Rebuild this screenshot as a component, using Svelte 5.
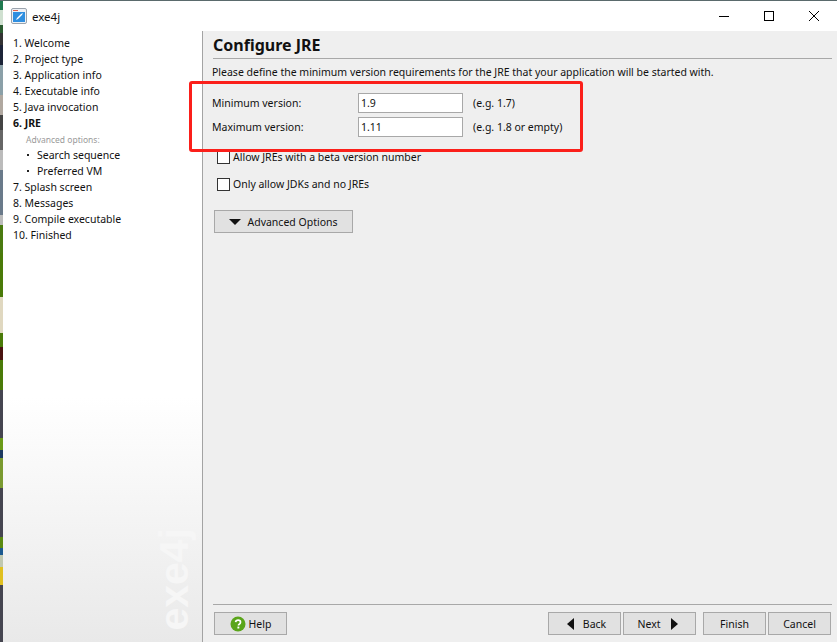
<script>
  const stepsTop = ['1. Welcome', '2. Project type', '3. Application info', '4. Executable info', '5. Java invocation']
  const stepsBottom = ['7. Splash screen', '8. Messages', '9. Compile executable', '10. Finished']
</script>

<div class="desktop">
  <div class="window">
    <header class="titlebar">
      <svg class="app-icon" viewBox="0 0 16 16" width="16" height="16">
        <rect x="0.5" y="0.5" width="15" height="15" rx="1.5" fill="#eef1f5" stroke="#9aa3ad" />
        <rect x="2" y="4" width="12" height="10" fill="#2f8fe0" />
        <rect x="2" y="2" width="5" height="1" fill="#e0604a" />
        <path d="M5 12l2-1 4-4 1-2-2 1-4 4z" fill="#fff" />
      </svg>
      <span class="app-name">exe4j</span>
      <div class="controls">
        <svg viewBox="0 0 12 12" width="12" height="12"><path d="M1 6.5h10" stroke="#000" /></svg>
        <svg viewBox="0 0 12 12" width="12" height="12"><rect x="1.5" y="1.5" width="9" height="9" fill="none" stroke="#000" /></svg>
        <svg viewBox="0 0 12 12" width="12" height="12"><path d="M1 1l10 10M11 1L1 11" stroke="#000" /></svg>
      </div>
    </header>

    <div class="body">
      <nav class="sidebar">
        {#each stepsTop as s}
          <div class="step">{s}</div>
        {/each}
        <div class="step current">6. JRE</div>
        <div class="sub-title">Advanced options:</div>
        <div class="sub"><span class="dot"></span>Search sequence</div>
        <div class="sub"><span class="dot"></span>Preferred VM</div>
        {#each stepsBottom as s}
          <div class="step">{s}</div>
        {/each}
        <div class="watermark">exe4j</div>
      </nav>

      <main class="content">
        <h1>Configure JRE</h1>
        <p class="desc">Please define the minimum version requirements for the JRE that your application will be started with.</p>

        <div class="form">
          <label for="min-v">Minimum version:</label>
          <input id="min-v" value="1.9" />
          <span>(e.g. 1.7)</span>
          <label for="max-v">Maximum version:</label>
          <input id="max-v" value="1.11" />
          <span>(e.g. 1.8 or empty)</span>
        </div>

        <div class="check first"><span class="box"></span>Allow JREs with a beta version number</div>
        <div class="check second"><span class="box"></span>Only allow JDKs and no JREs</div>

        <button class="advanced"><span class="tri-down"></span>Advanced Options</button>

        <footer class="buttons">
          <button class="help">
            <svg viewBox="0 0 16 16" width="16" height="16">
              <circle cx="8" cy="8" r="7.5" fill="#5aa51a" />
              <path d="M5.6 6.2C5.8 4.9 6.8 4.2 8.1 4.2c1.4 0 2.4.8 2.4 2 0 1-.6 1.5-1.3 2-.5.3-.7.6-.7 1.2" fill="none" stroke="#fff" stroke-width="1.7" />
              <rect x="7.4" y="10.6" width="1.9" height="1.9" fill="#fff" />
            </svg>
            Help
          </button>
          <div class="spacer"></div>
          <button class="nav back"><span class="tri-left"></span>Back</button>
          <button class="nav next">Next<span class="tri-right"></span></button>
          <button class="finish">Finish</button>
          <button class="cancel">Cancel</button>
        </footer>

        <div class="highlight"></div>
      </main>
    </div>
  </div>
</div>

<style>
  :global(body) {
    margin: 0;
    overflow: hidden;
  }

  .desktop {
    width: 837px;
    height: 642px;
    padding: 1px 0 0 3px;
    box-sizing: border-box;
    background:
      linear-gradient(#5a6a6c, #5a6a6c) 0 0 / 100% 1px no-repeat,
      linear-gradient(180deg,
        #1f7a50 0 10px, #cfe0d0 10px 25px, #2a5a30 25px 33px, #333 33px 45px, #1c2438 45px 65px,
        #8ba0a8 65px 95px, #b0a8a0 95px 115px, #444 115px 130px, #666 130px 150px, #bbb 150px 170px,
        #6a7a8a 170px 215px, #bbb 215px 225px, #4a7a10 225px 253px, #4a7a08 253px 297px,
        #e0d8c0 297px 333px, #4a7a08 333px 347px, #4a1410 347px 360px, #4a7a08 360px 390px,
        #454550 390px 438px, #6a9a18 438px 450px, #1c3a60 450px 458px, #7a9a30 458px 488px,
        #454550 488px 537px, #5a8a10 537px 548px, #1c5a90 548px 555px, #c0c8b0 555px 567px,
        #e0c020 567px 585px, #454550 585px 642px);
  }

  .window {
    height: 100%;
    display: flex;
    flex-direction: column;
    background: #fff;
    font-family: "Noto Sans", sans-serif;
    font-size: 10.5px;
    color: #111;
  }

  .titlebar {
    height: 30px;
    flex: none;
    display: flex;
    align-items: center;
    padding-left: 8px;
    font-size: 11.5px;
  }

  .app-icon {
    margin-right: 5px;
  }

  .controls {
    margin-left: auto;
    display: flex;
    gap: 33px;
    padding-right: 17px;
  }

  .body {
    flex: 1;
    display: flex;
    min-height: 0;
  }

  .sidebar {
    position: relative;
    width: 200px;
    flex: none;
    box-sizing: border-box;
    padding: 4px 0 0 10px;
    background: linear-gradient(180deg, #fff 0, #fff 60%, #e9e9e9 100%);
    border-right: 1px solid #a3a3a3;
  }

  .step,
  .sub {
    height: 16px;
    line-height: 16px;
    white-space: nowrap;
  }

  .current {
    font-weight: 700;
  }

  .sub-title {
    height: 16px;
    line-height: 17px;
    padding-left: 13px;
    font-size: 8.5px;
    color: #9a9a9a;
  }

  .sub {
    display: flex;
    align-items: center;
    padding-left: 14px;
  }

  .dot {
    width: 2px;
    height: 2px;
    background: #222;
    margin-right: 8px;
  }

  .watermark {
    position: absolute;
    right: 11px;
    bottom: 11px;
    writing-mode: vertical-rl;
    transform: rotate(180deg);
    font-family: "Liberation Sans", sans-serif;
    font-weight: 700;
    font-size: 41px;
    line-height: 34px;
    color: #f6f6f6;
  }

  .content {
    position: relative;
    flex: 1;
    display: flex;
    flex-direction: column;
    min-width: 0;
    padding: 0 5px 7px 10px;
    background: #efefef;
  }

  h1 {
    margin: 0;
    height: 28px;
    line-height: 29px;
    box-sizing: border-box;
    border-bottom: 1px solid #a8a8a8;
    font-size: 16px;
    font-weight: 700;
    color: #111;
  }

  .desc {
    margin: 0 0 0 -1px;
    padding-top: 5px;
    height: 17px;
    line-height: 17px;
    white-space: nowrap;
  }

  .form {
    display: grid;
    grid-template-columns: 146px 105px auto;
    grid-auto-rows: 20px;
    row-gap: 4px;
    align-items: center;
    margin: 12px 0 0 -1px;
  }

  .form span {
    padding-left: 10px;
  }

  input {
    box-sizing: border-box;
    width: 105px;
    height: 20px;
    border: 1px solid #a8a8a8;
    background: #fff;
    padding: 0 2px;
    font: inherit;
    color: #111;
    outline: none;
  }

  .check {
    display: flex;
    align-items: center;
    height: 14px;
    padding-left: 4px;
    white-space: nowrap;
  }

  .check.first,
  .check.second {
    margin-top: 13px;
  }

  .box {
    width: 11px;
    height: 11px;
    border: 1px solid #333;
    background: #fff;
    margin-right: 3px;
  }

  button {
    box-sizing: border-box;
    height: 23px;
    border: 1px solid #a8a8a8;
    background: #e1e1e1;
    font: inherit;
    color: #111;
    padding: 0;
    display: flex;
    align-items: center;
    justify-content: center;
  }

  .advanced {
    width: 139px;
    margin: 19px 0 0 1px;
  }

  .tri-down {
    border: 6.5px solid transparent;
    border-top: 6px solid #111;
    border-bottom: 0;
    margin-right: 6px;
  }

  .buttons {
    margin-top: auto;
    display: flex;
    border-top: 1px solid #a8a8a8;
    padding: 7px 1px 0 0;
  }

  .help {
    width: 73px;
    margin-left: 1px;
    gap: 3px;
  }

  .spacer {
    flex: 1;
  }

  .nav {
    width: 73px;
  }

  .back {
    padding-left: 4px;
  }

  .next {
    margin-left: 2px;
    padding-right: 4px;
  }

  .tri-left {
    border: 6px solid transparent;
    border-right: 7px solid #111;
    border-left: 0;
    margin-right: 9px;
  }

  .tri-right {
    border: 6px solid transparent;
    border-left: 7px solid #111;
    border-right: 0;
    margin-left: 10px;
  }

  .finish {
    width: 63px;
    margin-left: 7px;
  }

  .cancel {
    width: 63px;
    margin-left: 2px;
  }

  .highlight {
    position: absolute;
    left: -14px;
    top: 50px;
    width: 394px;
    height: 71px;
    box-sizing: border-box;
    border: 3px solid #fb1f1a;
    border-radius: 3px;
    pointer-events: none;
  }
</style>
